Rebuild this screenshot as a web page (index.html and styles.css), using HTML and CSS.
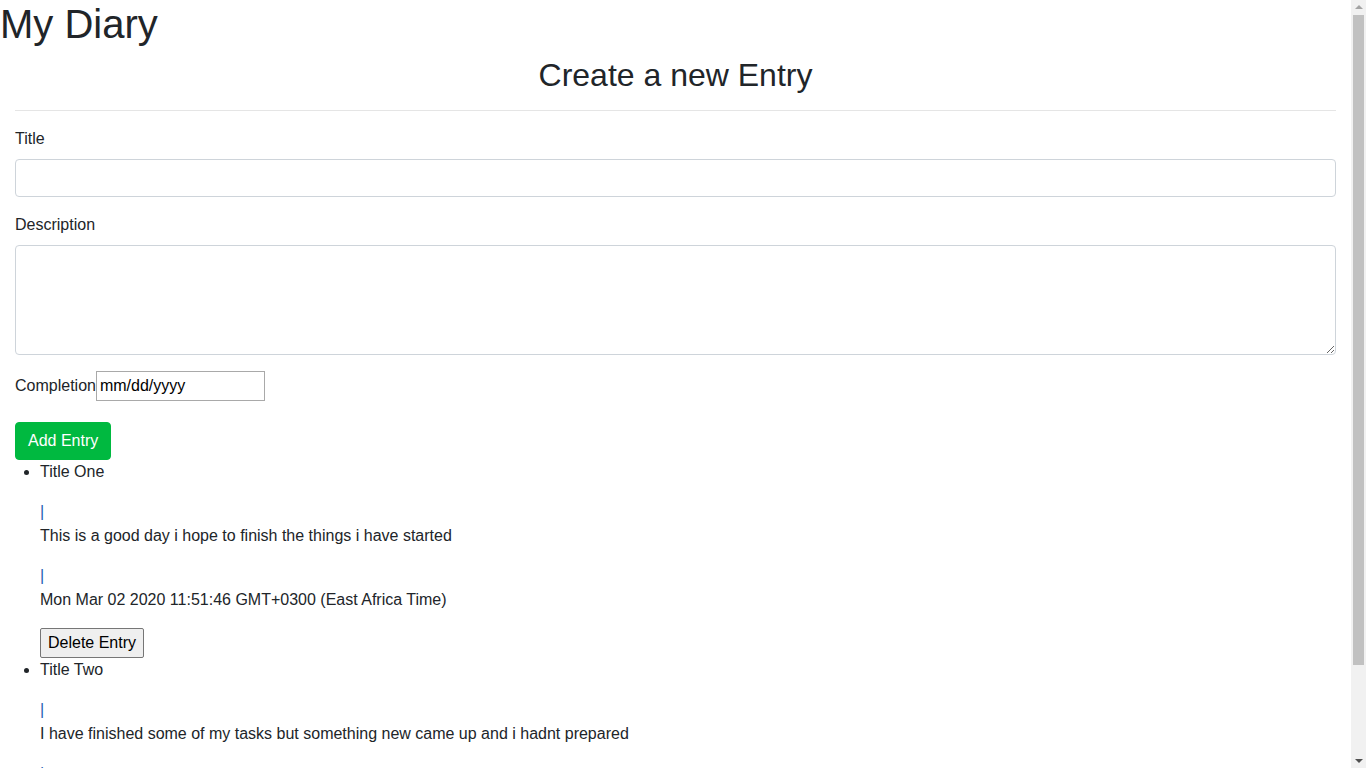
FILE: index.html
```html
<!DOCTYPE html>
<html lang="en">
<head>
<meta charset="utf-8">
<title>My Diary</title>
<link rel="stylesheet" href="styles.css">
</head>
<body>
<h1 class="app-title">My Diary</h1>
<div class="container">
  <h2 class="page-title">Create a new Entry</h2>
  <hr class="divider">
  <form class="entry-form">
    <div class="form-group">
      <label class="field-label">Title</label>
      <input class="form-control" type="text">
    </div>
    <div class="form-group">
      <label class="field-label">Description</label>
      <textarea class="form-control textarea" rows="4"></textarea>
    </div>
    <div class="form-group">
      <label class="field-label inline">Completion</label><input class="date-input" type="text" value="mm/dd/yyyy">
    </div>
    <button type="button" class="btn-success">Add Entry</button>
  </form>
</div>
<ul class="entries">
  <li class="entry">
    <div class="entry-title">Title One</div>
    <p class="entry-line"><span class="sep">|</span><br>This is a good day i hope to finish the things i have started</p>
    <p class="entry-line"><span class="sep">|</span><br>Mon Mar 02 2020 11:51:46 GMT+0300 (East Africa Time)</p>
    <button type="button" class="btn-plain">Delete Entry</button>
  </li>
  <li class="entry">
    <div class="entry-title">Title Two</div>
    <p class="entry-line"><span class="sep">|</span><br>I have finished some of my tasks but something new came up and i hadnt prepared</p>
    <p class="entry-line"><span class="sep">|</span><br>Mon Mar 02 2020 11:53:10 GMT+0300 (East Africa Time)</p>
    <button type="button" class="btn-plain">Delete Entry</button>
  </li>
</ul>
<div class="scrollbar" aria-hidden="true">
  <div class="scroll-arrow up"></div>
  <div class="scroll-thumb"></div>
  <div class="scroll-arrow down"></div>
</div>
</body>
</html>
```

FILE: styles.css
```css
html, body {
  margin: 0;
  padding: 0;
}
html {
  scrollbar-width: none;
}
html::-webkit-scrollbar {
  display: none;
}
body {
  font-family: "Liberation Sans", Arial, sans-serif;
  font-size: 16px;
  line-height: 1.5;
  color: #212529;
  background: #fff;
  padding-right: 15px;
}
.app-title {
  margin: 0 0 8px 0;
  font-size: 40px;
  font-weight: 400;
  line-height: 1.2;
}
.container {
  padding: 0 15px;
}
.page-title {
  margin: 0 0 8px 0;
  font-size: 32px;
  font-weight: 400;
  line-height: 1.2;
  text-align: center;
}
.divider {
  margin: 16px 0;
  border: 0;
  border-top: 1px solid rgba(0, 0, 0, 0.1);
  height: 0;
}
.entry-form {
  margin: 0;
}
.form-group {
  margin-bottom: 16px;
}
.field-label {
  display: inline-block;
  margin-bottom: 8px;
}
.form-control {
  display: block;
  box-sizing: border-box;
  width: 100%;
  height: 38px;
  padding: 6px 12px;
  font: inherit;
  line-height: 1.5;
  color: #495057;
  background: #fff;
  border: 1px solid #ced4da;
  border-radius: 4px;
  margin: 0;
}
.textarea {
  height: 110px;
  resize: vertical;
}
.date-input {
  box-sizing: border-box;
  width: 169px;
  height: 30px;
  padding: 1px 3px;
  margin: 0;
  font: inherit;
  line-height: 1.5;
  color: #000;
  background: #fff;
  border: 1px solid #a9a9a9;
  border-radius: 0;
}
.btn-success {
  display: inline-block;
  box-sizing: border-box;
  height: 38px;
  padding: 6px 12px;
  font: inherit;
  line-height: 1.5;
  color: #fff;
  background: #00b940;
  border: 1px solid #00b940;
  border-radius: 4px;
  vertical-align: top;
}
.entries {
  margin: 0 0 16px 0;
  padding-left: 40px;
}
.entry-title {
  margin-bottom: 16px;
}
.entry-line {
  margin: 0 0 16px 0;
}
.sep {
  color: #1d5fb0;
}
.btn-plain {
  display: inline-block;
  box-sizing: border-box;
  height: 30px;
  padding: 1px 7px;
  font: inherit;
  line-height: 1.5;
  color: #000;
  background: #efefef;
  border: 1px solid #767676;
  border-radius: 2px;
  vertical-align: top;
}
.scrollbar {
  position: fixed;
  top: 0;
  right: 0;
  width: 15px;
  height: 100vh;
  background: #f1f1f1;
  display: flex;
  flex-direction: column;
  align-items: center;
}
.scroll-arrow {
  width: 0;
  height: 0;
  border-left: 4px solid transparent;
  border-right: 4px solid transparent;
  flex: none;
}
.scroll-arrow.up {
  margin-top: 5px;
  margin-bottom: 6px;
  border-bottom: 4px solid #a3a3a3;
}
.scroll-arrow.down {
  margin-top: auto;
  margin-bottom: 5px;
  border-top: 4px solid #505050;
}
.scroll-thumb {
  width: 11px;
  height: 650px;
  background: #c1c1c1;
  flex: none;
}
```
